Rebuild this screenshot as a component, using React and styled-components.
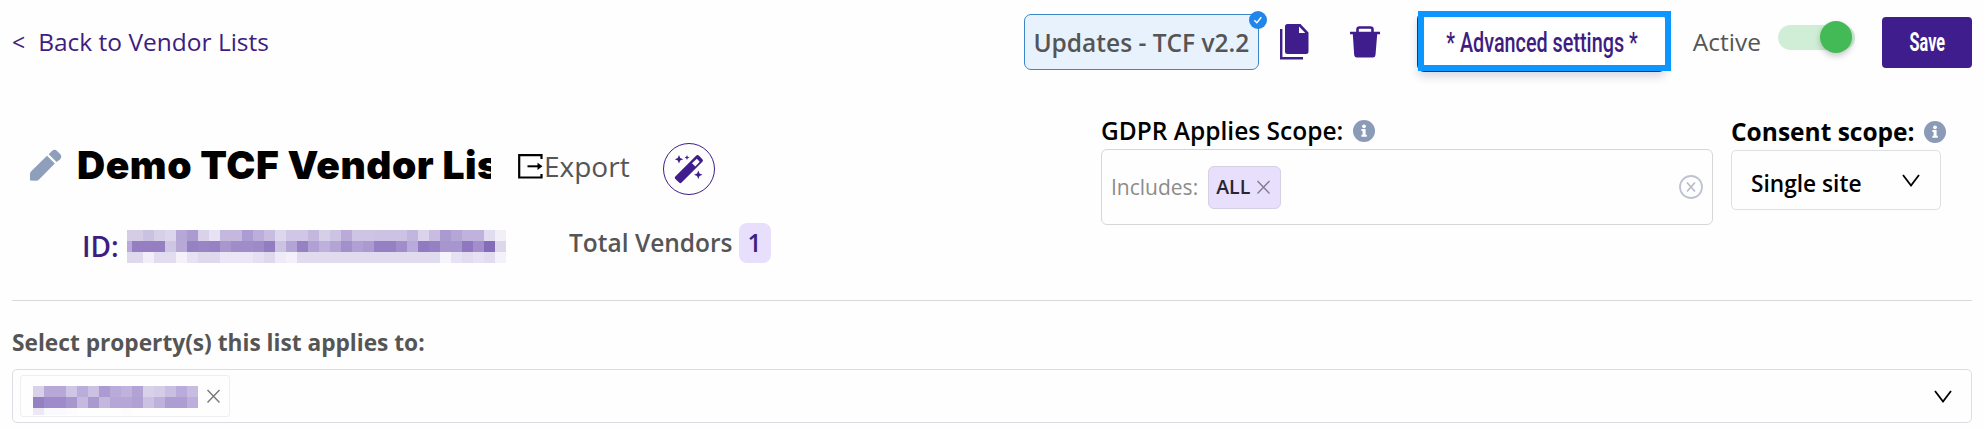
import styled, { createGlobalStyle } from "styled-components";

const GlobalStyle = createGlobalStyle`
  * {
    box-sizing: border-box;
  }
  body {
    margin: 0;
    background: #fefefe;
    font-family: "Open Sans", "Noto Sans", sans-serif;
  }
  svg {
    display: block;
    flex: none;
  }
`;

const Page = styled.div`
  width: 1983px;
  height: 430px;
  padding: 0 11px 0 12px;
  overflow: hidden;
`;

const TopBar = styled.div`
  display: flex;
  align-items: center;
  height: 84px;
`;

const Text = styled.span`
  display: block;
  flex: none;
  font-size: ${(props) => props.$size || 24.5}px;
  font-weight: ${(props) => props.$weight || 400};
  color: ${(props) => props.$color || "#555555"};
  line-height: 34px;
  white-space: nowrap;
`;

const BackLink = styled.a`
  display: flex;
  align-items: center;
  gap: 13px;
  margin-right: auto;
  padding-bottom: 1px;
`;

const UpdatesButton = styled.button`
  position: relative;
  display: flex;
  align-items: center;
  justify-content: center;
  width: 235px;
  height: 56px;
  padding: 2px 0 0;
  border: 1px solid #3c86c8;
  border-radius: 7px;
  background: #e8f2fd;
  font-family: inherit;
`;

const CheckBadge = styled.span`
  position: absolute;
  top: -4px;
  right: -9px;
`;

const IconButton = styled.button`
  display: flex;
  margin: 0 0 0 ${(props) => props.$left}px;
  padding: 0;
  border: none;
  background: none;
`;

const AdvancedButton = styled.button`
  position: relative;
  display: flex;
  align-items: center;
  justify-content: center;
  width: 249px;
  height: 60px;
  margin-left: 37px;
  padding: 2px 0 0 2px;
  border: 1px solid #3f1d8a;
  border-radius: 7px;
  background: #ffffff;
  box-shadow: 0 5px 9px rgba(40, 20, 90, 0.16);
`;

const Highlight = styled.span`
  position: absolute;
  top: -2px;
  left: 0;
  width: 253px;
  height: 60px;
  border: 6px solid #0c96ff;
`;

const Condensed = styled.span`
  flex: none;
  font-family: Roboto, sans-serif;
  font-size: ${(props) => props.$size}px;
  font-weight: ${(props) => props.$weight};
  color: ${(props) => props.$color};
  line-height: 30px;
  white-space: nowrap;
  transform: scaleX(${(props) => props.$stretch});
`;

const ActiveLabel = styled.div`
  margin-left: 27px;
  padding-bottom: 1px;
`;

const Toggle = styled.div`
  display: flex;
  align-items: center;
  justify-content: flex-end;
  width: 77px;
  height: 25px;
  margin: 0 0 10px 17px;
  border-radius: 13px;
  background: #d0eed6;
`;

const Knob = styled.div`
  width: 32px;
  height: 32px;
  margin-right: 3px;
  border-radius: 50%;
  background: #44ba57;
  box-shadow: 0 3px 6px rgba(0, 0, 0, 0.22);
`;

const SaveButton = styled.button`
  display: flex;
  align-items: center;
  justify-content: center;
  width: 90px;
  height: 51px;
  margin-left: 27px;
  padding: 2px 0 0;
  border: none;
  border-radius: 4px;
  background: #401d8c;
`;

const Details = styled.div`
  display: flex;
  justify-content: space-between;
  height: 217px;
  padding-right: 31px;
  border-bottom: 1px solid #d9d9d9;
`;

const Summary = styled.div`
  padding: 54px 0 0 17px;
`;

const TitleRow = styled.div`
  display: flex;
  align-items: center;
  height: 56px;
`;

const Title = styled.h1`
  width: 414px;
  margin: 0 0 2px 14px;
  overflow: hidden;
  font-family: Inter, sans-serif;
  font-size: 39px;
  font-weight: 900;
  line-height: 52px;
  letter-spacing: 0.5px;
  white-space: nowrap;
  color: #000000;
`;

const ExportButton = styled.div`
  display: flex;
  align-items: center;
  gap: 1px;
  margin-left: 27px;
`;

const WandButton = styled.div`
  display: flex;
  align-items: center;
  justify-content: center;
  width: 52px;
  height: 52px;
  margin: 6px 0 0 33px;
  border: 1px solid #401d8c;
  border-radius: 50%;
`;

const MetaRow = styled.div`
  display: flex;
  align-items: center;
  height: 40px;
  margin: 29px 0 0 53px;
`;

const ListId = styled.div`
  display: flex;
  align-items: center;
  justify-content: space-between;
  width: 424px;
  margin-right: 63px;
  padding-top: 6px;
`;

const Mosaic = styled.div`
  display: grid;
  grid-template-columns: ${(props) => props.$first}px repeat(${(props) => props.$count - 1}, 11px);
  grid-template-rows: 11px 11px ${(props) => props.$last}px;
  flex: none;
`;

const Cell = styled.div`
  background: ${(props) => props.$fill};
`;

const CountBadge = styled.div`
  display: flex;
  align-items: center;
  justify-content: center;
  width: 32px;
  height: 40px;
  margin-left: 6px;
  border-radius: 8px;
  background: #e7dffc;
`;

const Scopes = styled.div`
  display: flex;
  gap: 18px;
  padding-top: 30px;
`;

const ScopeField = styled.div`
  width: ${(props) => props.$width}px;
`;

const LabelRow = styled.div`
  display: flex;
  align-items: center;
  gap: ${(props) => props.$gap}px;
  height: 35px;
  padding-bottom: ${(props) => props.$lift}px;
`;

const ScopeInput = styled.div`
  display: flex;
  align-items: center;
  height: 76px;
  padding: 0 9px 0 9px;
  border: 1px solid #d4d6d9;
  border-radius: 6px;
`;

const ScopeTag = styled.div`
  display: flex;
  align-items: center;
  justify-content: space-between;
  width: 73px;
  height: 43px;
  margin-left: 10px;
  padding: 0 10px 0 7px;
  border: 1px solid #d5d0e2;
  border-radius: 6px;
  background: #e8dffd;
`;

const ClearButton = styled.div`
  margin-left: auto;
`;

const SiteSelect = styled.div`
  display: flex;
  align-items: center;
  justify-content: space-between;
  height: 60px;
  margin-top: 1px;
  padding: 0 20px 0 19px;
  border: 1px solid #dde0e3;
  border-radius: 5px;
`;

const SelectedSite = styled.div`
  padding-top: 8px;
`;

const PropertyLabel = styled.div`
  padding: 25px 0 9px;
`;

const PropertySelect = styled.div`
  display: flex;
  align-items: center;
  justify-content: space-between;
  height: 54px;
  padding: 0 19px 0 7px;
  border: 1px solid #dadde1;
  border-radius: 5px;
`;

const PropertyTag = styled.div`
  display: flex;
  align-items: center;
  justify-content: space-between;
  width: 210px;
  height: 42px;
  padding: 8px 9px 0 12px;
  border: 1px solid #efeff1;
  border-radius: 3px;
`;

const TagClose = styled.div`
  padding-bottom: 8px;
`;

const idRows = [
  "d5cde6 d5cde6 cbc2e2 d6cfe8 dcd6ec b5a7d6 ac9bd0 d9d2ea e8e3f4 c4b8df c4b8df ac9cd1 bbaedb c8bde1 ddd7ed cfc7e5 cfc7e5 c4b8df d6cfe8 cdc4e4 b9aad9 cec5e4 cec5e4 ccc2e3 ccc2e3 ccc2e3 c2b6de dad3eb c8bde1 ab9ad0 b5a6d7 bfb2dd bfb2dd e2dcf0 f2eff9",
  "b9abd9 957fc2 957fc2 957fc2 cfc6e5 b7a8d8 9681c2 9985c4 9681c2 a897cd 9f8cc8 9f8cc8 9d8ac7 937dc1 ccc3e3 b3a4d6 9681c2 b0a0d4 bdb0dc b3a4d6 a290ca b0a0d4 ab9ad0 9480c2 9480c2 a08dc9 b9abd9 917bc0 9581c2 a796cd a796cd 8f78bf a18eca 856cb8 ddd7ed",
  "dfd9ee dfd9ee f1eef8 e2dcf0 e2dcf0 f4f1fa e7e2f3 dfd9ee dfd9ee eae6f5 eae6f5 eae6f5 e4dff2 dfd9ee eeeaf7 f3f0f9 e1dbef e1dbef e1dbef e1dbef e1dbef e1dbef e1dbef e1dbef e1dbef e1dbef e1dbef e1dbef e1dbef f6f4fb e6e1f3 e2dcf0 e6e1f3 e2dcf0 f4f1fa",
];

const propertyRows = [
  "d9d0ea b7a8d8 b7a8d8 cfc5e5 bbaddb cbc1e2 ac9bd1 b9abd9 bfb2dd b3a3d5 d9d1ea d5cce8 cabfe2 baacda c8bde1",
  "9580c2 9f8bc9 9f8bc9 a896ce c5b9df aa99cf c3b7de b5a6d7 b5a6d7 b0a0d4 cbc1e2 beb1dc ae9dd2 ae9dd2 bcafdb",
  "ece8f6 faf9fd faf9fd fcfbfe fefefe fefefe fefefe fefefe fcfbfe fefefe fefefe fefefe fefefe fefefe fefefe",
];

const Redacted = ({ rows, first, last }) => {
  const cells = rows.join(" ").split(" ");
  return (
    <Mosaic $first={first} $last={last} $count={cells.length / rows.length}>
      {cells.map((color, index) => (
        <Cell key={index} $fill={"#" + color} />
      ))}
    </Mosaic>
  );
};

const InfoIcon = () => (
  <svg width="22" height="22" viewBox="0 0 22 22">
    <circle cx="11" cy="11" r="11" fill="#8b9bb7" />
    <circle cx="11" cy="6.3" r="1.900" fill="#fff" />
    <path d="M8.400 9h4.200v5.800h1.200v2H8.400v-2h1.200V11H8.400z" fill="#fff" />
  </svg>
);

const CloseIcon = ({ color }) => (
  <svg width="13" height="14" viewBox="0 0 13 14">
    <path d="M.5 1l12 12.5M12.5 1L.5 13.5" stroke={color} strokeWidth="1.4" />
  </svg>
);

const Chevron = () => (
  <svg width="18" height="13" viewBox="0 0 18 13">
    <path d="M1 1l8 10.5L17 1" fill="none" stroke="#000" strokeWidth="1.8" />
  </svg>
);

const CopyIcon = () => (
  <svg width="29" height="36" viewBox="0 0 29 36">
    <path d="M1.2 5v29.3H23" fill="none" stroke="#401d8c" strokeWidth="2.4" />
    <path
      d="M7.500 0h13L28.500 8.500V27.500a2.500 2.500 0 0 1-2.500 2.500H7.500a2.500 2.500 0 0 1-2.500-2.500V2.500A2.500 2.500 0 0 1 7.500 0zM19 2.500V9h6.300z"
      fill="#401d8c"
      fillRule="evenodd"
    />
  </svg>
);

const TrashIcon = () => (
  <svg width="30" height="32" viewBox="0 0 30 32">
    <path d="M7.500 7V3.500a2 2 0 0 1 2-2h11a2 2 0 0 1 2 2V7" fill="none" stroke="#401d8c" strokeWidth="2.600" />
    <path d="M0 5.800h30v2.400h-2.800L25.500 29a2.800 2.800 0 0 1-2.800 2.500H7A2.800 2.800 0 0 1 4.200 29L2.800 8.200H0z" fill="#401d8c" />
  </svg>
);

const PencilIcon = () => (
  <svg width="34" height="34" viewBox="0 0 34 34">
    <path d="M1 31.500V25a4 4 0 0 1 1.200-2.800L18 6.800l7.800 7.700L10 30.500a4 4 0 0 1-2.800 1.200z" fill="#8d9fba" />
    <path d="M19.700 5.200l3-3a4 4 0 0 1 5.600 0l2.600 2.600a4 4 0 0 1 0 5.600l-3.300 2.700z" fill="#8d9fba" />
  </svg>
);

const ExportIcon = () => (
  <svg width="25" height="25" viewBox="0 0 25 25">
    <path d="M23.500 5V1.200H1.200v22.300h22.300V20" fill="none" stroke="#000" strokeWidth="2.200" />
    <path d="M9.500 12.300H21" stroke="#000" strokeWidth="2" />
    <path d="M19.500 8.700l5 3.600-5 3.600z" fill="#000" />
  </svg>
);

const WandIcon = () => (
  <svg width="30" height="30" viewBox="0 0 30 30">
    <path
      d="M1.300 22.500L22.300 1.600a1.800 1.800 0 0 1 2.500 0l3.600 3.600a1.800 1.800 0 0 1 0 2.500L7.600 28.600a1.800 1.800 0 0 1-2.500 0l-3.800-3.700a1.700 1.700 0 0 1 0-2.400zM18 9.300l3.300 3.200 4.400-4.700-2.900-3z"
      fill="#401d8c"
      fillRule="evenodd"
    />
    <path
      d="M5 1l1.200 2.900L9.200 5.200 6.200 6.500 5 9.500 3.800 6.500.8 5.200l3-1.300zM13 1l.7 1.700 1.800.7-1.800.8L13 6l-.7-1.800-1.800-.8 1.800-.7zM24.300 16.500l1.200 3 3 1.200-3 1.300-1.200 3-1.200-3-3-1.300 3-1.200z"
      fill="#401d8c"
    />
  </svg>
);

const CheckIcon = () => (
  <svg width="18" height="18" viewBox="0 0 18 18">
    <circle cx="9" cy="9" r="9" fill="#2186ea" />
    <path d="M5.300 9.300l2.500 2.400 4.500-5.500" fill="none" stroke="#fff" strokeWidth="1.400" />
  </svg>
);

const ClearIcon = () => (
  <svg width="24" height="24" viewBox="0 0 24 24">
    <circle cx="12" cy="12" r="11" fill="none" stroke="#bcc4d0" strokeWidth="1.800" />
    <path d="M8 7.500l8 9M16 7.500l-8 9" stroke="#b3bccb" strokeWidth="1.600" />
  </svg>
);

const Header = () => (
  <TopBar>
    <BackLink>
      <Text $size={23} $color="#3f1d80">&lt;</Text>
      <Text $color="#3f1d80">Back to Vendor Lists</Text>
    </BackLink>
    <UpdatesButton>
      <Text $weight={600}>Updates - TCF v2.2</Text>
      <CheckBadge>
        <CheckIcon />
      </CheckBadge>
    </UpdatesButton>
    <IconButton $left={21}>
      <CopyIcon />
    </IconButton>
    <IconButton $left={41}>
      <TrashIcon />
    </IconButton>
    <AdvancedButton>
      <Condensed $size={27.5} $weight={500} $color="#3f1d80" $stretch={0.72}>
        * Advanced settings *
      </Condensed>
      <Highlight />
    </AdvancedButton>
    <ActiveLabel>
      <Text>Active</Text>
    </ActiveLabel>
    <Toggle>
      <Knob />
    </Toggle>
    <SaveButton>
      <Condensed $size={25} $weight={700} $color="#ffffff" $stretch={0.65}>
        Save
      </Condensed>
    </SaveButton>
  </TopBar>
);

const App = () => {
  return (
    <Page>
      <GlobalStyle />
      <Header />
      <Details>
        <Summary>
          <TitleRow>
            <PencilIcon />
            <Title>Demo TCF Vendor Lis</Title>
            <ExportButton>
              <ExportIcon />
              <Text $size={28}>Export</Text>
            </ExportButton>
            <WandButton>
              <WandIcon />
            </WandButton>
          </TitleRow>
          <MetaRow>
            <ListId>
              <Text $size={28} $weight={600} $color="#3f1d80">ID:</Text>
              <Redacted rows={idRows} first={5} last={11} />
            </ListId>
            <Text $weight={600}>Total Vendors</Text>
            <CountBadge>
              <Text $weight={600} $color="#3f1d80">1</Text>
            </CountBadge>
          </MetaRow>
        </Summary>
        <Scopes>
          <ScopeField $width={612}>
            <LabelRow $gap={10} $lift={1}>
              <Text $weight={600} $color="#000000">GDPR Applies Scope:</Text>
              <InfoIcon />
            </LabelRow>
            <ScopeInput>
              <Text $size={21} $color="#8c8c8c">Includes:</Text>
              <ScopeTag>
                <Text $size={19.5} $weight={600} $color="#29262f">ALL</Text>
                <CloseIcon color="#817c8e" />
              </ScopeTag>
              <ClearButton>
                <ClearIcon />
              </ClearButton>
            </ScopeInput>
          </ScopeField>
          <ScopeField $width={210}>
            <LabelRow $gap={9} $lift={0}>
              <Text $weight={700} $color="#000000">Consent scope:</Text>
              <InfoIcon />
            </LabelRow>
            <SiteSelect>
              <SelectedSite>
                <Text $size={22.7} $weight={600} $color="#000000">Single site</Text>
              </SelectedSite>
              <Chevron />
            </SiteSelect>
          </ScopeField>
        </Scopes>
      </Details>
      <PropertyLabel>
        <Text $size={22.7} $weight={700}>Select property(s) this list applies to:</Text>
      </PropertyLabel>
      <PropertySelect>
        <PropertyTag>
          <Redacted rows={propertyRows} first={11} last={7} />
          <TagClose>
            <CloseIcon color="#777777" />
          </TagClose>
        </PropertyTag>
        <Chevron />
      </PropertySelect>
    </Page>
  );
};

export default App;
